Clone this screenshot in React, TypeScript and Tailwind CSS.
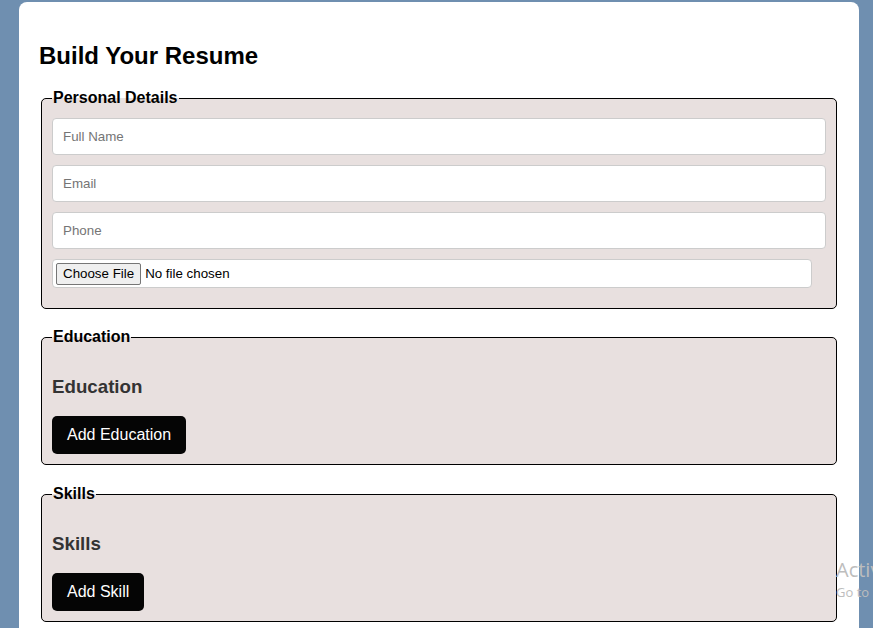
const inputCls =
  "block w-full h-[37px] mb-[10px] px-[10px] bg-white border border-[#cccccc] rounded-[4px] text-[13.33px] text-black placeholder:text-[#757575] outline-none";

const Section = ({
  legend,
  gap,
  children,
}: {
  legend: string;
  gap: string;
  children: React.ReactNode;
}) => (
  <fieldset className={`mx-[2px] ${gap} border border-black rounded-[5px] bg-[#e8e0df] px-[10px] pb-[10px]`}>
    <legend className="px-[1px] text-[16px] font-bold leading-[18px] text-black">{legend}</legend>
    {children}
  </fieldset>
);

const App = () => {
  return (
    <div
      className="relative h-screen w-full overflow-hidden bg-[#6f8fb0]"
      style={{ fontFamily: '"Liberation Sans", Arial, sans-serif' }}
    >
      <div className="ml-[19px] mt-[2px] w-[840px] bg-white rounded-[8px] p-5">
        <h2 className="text-[24px] font-bold leading-[27.6px] my-[19.92px] text-black">Build Your Resume</h2>

        <Section legend="Personal Details" gap="mb-[19px]">
          <div className="pt-[11px] pb-[10px]">
            <input className={inputCls} placeholder="Full Name" />
            <input className={inputCls} placeholder="Email" />
            <input className={inputCls} placeholder="Phone" />
            <input
              type="file"
              className="block w-[760px] h-[29px] px-[3px] py-[3px] bg-white border border-[#cccccc] rounded-[4px] text-[13.33px] text-black file:mr-[4px] file:h-[22px] file:px-[6px] file:border file:border-solid file:border-[#767676] file:rounded-[2px] file:bg-[#efefef] file:text-[13.33px] file:text-black"
            />
          </div>
        </Section>

        <Section legend="Education" gap="mb-5">
          <div className="pt-[11px]">
            <h3 className="text-[18.72px] font-bold leading-[21.5px] my-[18.72px] text-[#333333]">Education</h3>
            <button className="bg-[#050505] text-white text-[16px] leading-[18px] px-[15px] py-[10px] rounded-[5px]">
              Add Education
            </button>
          </div>
        </Section>

        <Section legend="Skills" gap="mb-5">
          <div className="pt-[11px]">
            <h3 className="text-[18.72px] font-bold leading-[21.5px] my-[18.72px] text-[#333333]">Skills</h3>
            <button className="bg-[#050505] text-white text-[16px] leading-[18px] px-[15px] py-[10px] rounded-[5px]">
              Add Skill
            </button>
          </div>
        </Section>
      </div>

      <div
        className="absolute left-[836px] top-[557px] whitespace-nowrap text-[#bdbdbd] pointer-events-none"
        style={{ fontFamily: '"Open Sans", "Noto Sans", sans-serif' }}
      >
        <div className="text-[20px] leading-[26px]">Activate Windows</div>
        <div className="text-[13px] leading-[18px]">Go to Settings to activate Windows.</div>
      </div>
    </div>
  );
};

export default App;
